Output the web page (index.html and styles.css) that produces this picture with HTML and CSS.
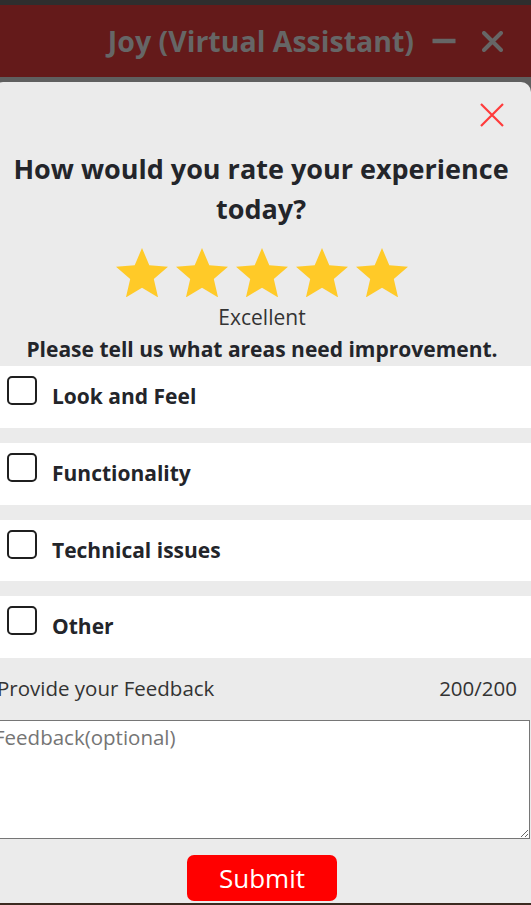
FILE: index.html
```html
<!DOCTYPE html>
<html lang="en">
<head>
    <meta charset="UTF-8">
    <title>Joy - Feedback</title>
    <link rel="stylesheet" href="styles.css">
</head>
<body>
    <div class="window-top"></div>
    <header class="chat-header">
        <h1 class="chat-title">Joy (Virtual Assistant)</h1>
        <svg class="header-btn minimize" width="24" height="24" viewBox="0 0 24 24">
            <line x1="0.5" y1="12" x2="23.5" y2="12" stroke="#666" stroke-width="4.5"/>
        </svg>
        <svg class="header-btn" width="21" height="21" viewBox="0 0 21 21">
            <path d="M2 2 L19 19 M19 2 L2 19" stroke="#666" stroke-width="4" stroke-linecap="round"/>
        </svg>
    </header>

    <div class="backdrop">
        <div class="feedback-card">
            <div class="close-row">
                <svg width="24" height="24" viewBox="0 0 24 24">
                    <path d="M1 1 L23 23 M23 1 L1 23" stroke="#ff3b3b" stroke-width="2.2"/>
                </svg>
            </div>

            <h2 class="question">How would you rate your experience today?</h2>

            <div class="stars">
                <svg class="star" viewBox="2 2 20 19"><path d="M12 17.27L18.18 21l-1.64-7.03L22 9.24l-7.19-.61L12 2 9.19 8.63 2 9.24l5.46 4.73L5.82 21z"/></svg>
                <svg class="star" viewBox="2 2 20 19"><path d="M12 17.27L18.18 21l-1.64-7.03L22 9.24l-7.19-.61L12 2 9.19 8.63 2 9.24l5.46 4.73L5.82 21z"/></svg>
                <svg class="star" viewBox="2 2 20 19"><path d="M12 17.27L18.18 21l-1.64-7.03L22 9.24l-7.19-.61L12 2 9.19 8.63 2 9.24l5.46 4.73L5.82 21z"/></svg>
                <svg class="star" viewBox="2 2 20 19"><path d="M12 17.27L18.18 21l-1.64-7.03L22 9.24l-7.19-.61L12 2 9.19 8.63 2 9.24l5.46 4.73L5.82 21z"/></svg>
                <svg class="star" viewBox="2 2 20 19"><path d="M12 17.27L18.18 21l-1.64-7.03L22 9.24l-7.19-.61L12 2 9.19 8.63 2 9.24l5.46 4.73L5.82 21z"/></svg>
            </div>
            <div class="rating-text">Excellent</div>
            <div class="areas-title">Please tell us what areas need improvement.</div>

            <div class="areas">
                <label class="area-row"><input type="checkbox"><span>Look and Feel</span></label>
                <label class="area-row"><input type="checkbox"><span>Functionality</span></label>
                <label class="area-row"><input type="checkbox"><span>Technical issues</span></label>
                <label class="area-row"><input type="checkbox"><span>Other</span></label>
            </div>

            <div class="feedback-head">
                <span>Provide your Feedback</span>
                <span>200/200</span>
            </div>
            <textarea class="feedback-input" placeholder="Feedback(optional)"></textarea>

            <button class="submit-btn" type="button">Submit</button>
        </div>
    </div>
</body>
</html>
```

FILE: styles.css
```css
* {
    box-sizing: border-box;
}
body {
    margin: 0;
    height: 905px;
    overflow: hidden;
    font-family: "Open Sans", sans-serif;
    background: #5f5f5f;
    display: flex;
    flex-direction: column;
}
.window-top {
    height: 5px;
    background: #2e2e2e;
}
.chat-header {
    height: 72px;
    background: #641a1a;
    display: flex;
    align-items: center;
    justify-content: flex-end;
    padding-right: 28px;
}
.chat-title {
    color: #666;
    font-size: 28.5px;
    font-weight: 700;
    margin: 0 18px 0 0;
}
.header-btn {
    display: block;
}
.minimize {
    margin-right: 26px;
}
.backdrop {
    flex: 1;
    min-height: 0;
    padding-top: 5px;
    border-bottom: 2px solid #3b2a20;
    display: flex;
}
.feedback-card {
    flex-shrink: 0;
    width: 538px;
    margin-left: -7px;
    background: #ebebeb;
    border-radius: 10px 10px 0 0;
    display: flex;
    flex-direction: column;
    color: #23252a;
}
.close-row {
    display: flex;
    justify-content: flex-end;
    padding-right: 27px;
    margin-top: 21px;
    height: 24px;
}
.close-row svg {
    display: block;
}
.question {
    font-size: 27px;
    font-weight: 700;
    line-height: 40px;
    text-align: center;
    margin: 22px 10px 0 8px;
}
.stars {
    display: flex;
    justify-content: center;
    gap: 8px;
    margin-top: 19px;
}
.star {
    width: 52px;
    height: 49.4px;
    fill: #ffca28;
}
.rating-text {
    text-align: center;
    font-size: 21px;
    line-height: 27px;
    color: #333;
    margin-top: 7px;
}
.areas-title {
    text-align: center;
    font-size: 21px;
    font-weight: 700;
    line-height: 26px;
    margin-top: 5px;
}
.areas {
    margin-top: 4px;
}
.area-row {
    display: flex;
    align-items: flex-start;
    height: 61.7px;
    padding: 10px 14px;
    background: #fff;
    margin-bottom: 15px;
}
.area-row:last-child {
    margin-bottom: 0;
}
.area-row input {
    appearance: none;
    width: 30px;
    height: 29px;
    margin: 0;
    border: 2.3px solid #1f1f1f;
    border-radius: 5px;
    background: #fff;
}
.area-row span {
    font-size: 21px;
    font-weight: 700;
    line-height: 27px;
    margin: 7px 0 0 15px;
}
.feedback-head {
    height: 61.7px;
    display: flex;
    align-items: center;
    justify-content: space-between;
    padding: 0 14px 0 4px;
    font-size: 20.5px;
    line-height: 27px;
    color: #333;
}
.feedback-input {
    display: block;
    width: 539px;
    height: 119.5px;
    margin-left: -2px;
    padding: 2px;
    border: 1px solid #767676;
    font-family: "Open Sans", sans-serif;
    font-size: 20.5px;
    background: #fff;
}
.feedback-input::placeholder {
    color: #757575;
}
.submit-btn {
    width: 150px;
    height: 46px;
    margin: 16px auto 0 auto;
    border: none;
    border-radius: 7px;
    background: #ff0000;
    color: #fff;
    font-family: "Open Sans", sans-serif;
    font-size: 26px;
    line-height: 1;
    cursor: pointer;
}
```
